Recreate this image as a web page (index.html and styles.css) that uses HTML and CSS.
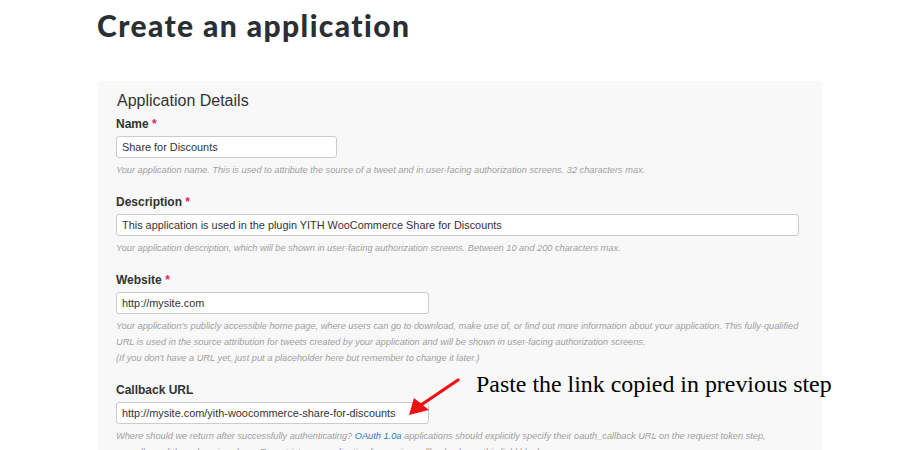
FILE: index.html
```html
<!DOCTYPE html>
<html>
<head>
<meta charset="utf-8">
<link rel="stylesheet" href="styles.css">
</head>
<body>
<div class="page">
  <h1 class="title">Create an application</h1>
  <div class="panel">
    <h2 class="panel-title">Application Details</h2>
    <div class="field">
      <div class="label">Name <span class="req">*</span></div>
      <div class="input w-name">Share for Discounts</div>
      <div class="help">Your application name. This is used to attribute the source of a tweet and in user-facing authorization screens. 32 characters max.</div>
    </div>
    <div class="field">
      <div class="label">Description <span class="req">*</span></div>
      <div class="input w-desc">This application is used in the plugin YITH WooCommerce Share for Discounts</div>
      <div class="help">Your application description, which will be shown in user-facing authorization screens. Between 10 and 200 characters max.</div>
    </div>
    <div class="field">
      <div class="label">Website <span class="req">*</span></div>
      <div class="input w-url">http://mysite.com</div>
      <div class="help">Your application's publicly accessible home page, where users can go to download, make use of, or find out more information about your application. This fully-qualified URL is used in the source attribution for tweets created by your application and will be shown in user-facing authorization screens.<br>(If you don't have a URL yet, just put a placeholder here but remember to change it later.)</div>
    </div>
    <div class="field">
      <div class="label">Callback URL</div>
      <div class="input w-url">http://mysite.com/yith-woocommerce-share-for-discounts</div>
      <div class="help">Where should we return after successfully authenticating? <a class="link">OAuth 1.0a</a> applications should explicitly specify their oauth_callback URL on the request token step, regardless of the value given here. To restrict your application from using callbacks, leave this field blank.</div>
    </div>
  </div>
</div>
<div class="note">Paste the link copied in previous step</div>
<svg class="arrow" width="899" height="450" viewBox="0 0 899 450">
  <line x1="458" y1="380" x2="421" y2="405" stroke="#ee1111" stroke-width="3.2" stroke-linecap="round"/>
  <polygon points="409,415 414,398 429,410" fill="#ee1111"/>
</svg>
</body>
</html>
```
FILE: styles.css
```css
html, body {
  margin: 0;
  padding: 0;
  background: #ffffff;
  overflow: hidden;
  height: 450px;
}
.page {
  font-family: "Liberation Sans", Arial, sans-serif;
  color: #333333;
}
.title {
  margin: 0 0 0 97px;
  padding-top: 6px;
  height: 75px;
  box-sizing: border-box;
  font-family: "Lato", "Open Sans", sans-serif;
  font-weight: 900;
  font-size: 30px;
  line-height: 38px;
  color: #292f33;
  letter-spacing: 1.4px;
}
.panel {
  margin: 6px 0 0 98px;
  width: 724px;
  box-sizing: border-box;
  background: #f8f8f8;
  border-radius: 4px;
  padding: 9px 23px 40px 18px;
}
.panel-title {
  margin: 0 0 4px 1px;
  font-size: 16px;
  font-weight: normal;
  line-height: 22px;
  color: #333333;
}
.field {
  margin-bottom: 16px;
}
.label {
  font-size: 12px;
  font-weight: bold;
  line-height: 16px;
  color: #333333;
  margin-bottom: 4px;
}
.req {
  color: #e0245e;
}
.input {
  box-sizing: border-box;
  height: 22px;
  background: #ffffff;
  border: 1px solid #cccccc;
  border-radius: 3px;
  padding: 0 5px;
  font-size: 10.9px;
  line-height: 20px;
  color: #333333;
  white-space: nowrap;
  overflow: hidden;
}
.w-name { width: 221px; }
.w-desc { width: 683px; }
.w-url { width: 313px; }
.help {
  margin-top: 4px;
  margin-right: -6px;
  font-size: 9.23px;
  font-style: italic;
  line-height: 16px;
  color: #a0a0a0;
}
.link {
  color: #2b7bb9;
}
.note {
  position: absolute;
  left: 476px;
  top: 372px;
  font-family: "Liberation Serif", "Times New Roman", serif;
  font-size: 23.9px;
  line-height: 24px;
  color: #000000;
  white-space: nowrap;
}
.arrow {
  position: absolute;
  left: 0;
  top: 0;
  pointer-events: none;
}
```
